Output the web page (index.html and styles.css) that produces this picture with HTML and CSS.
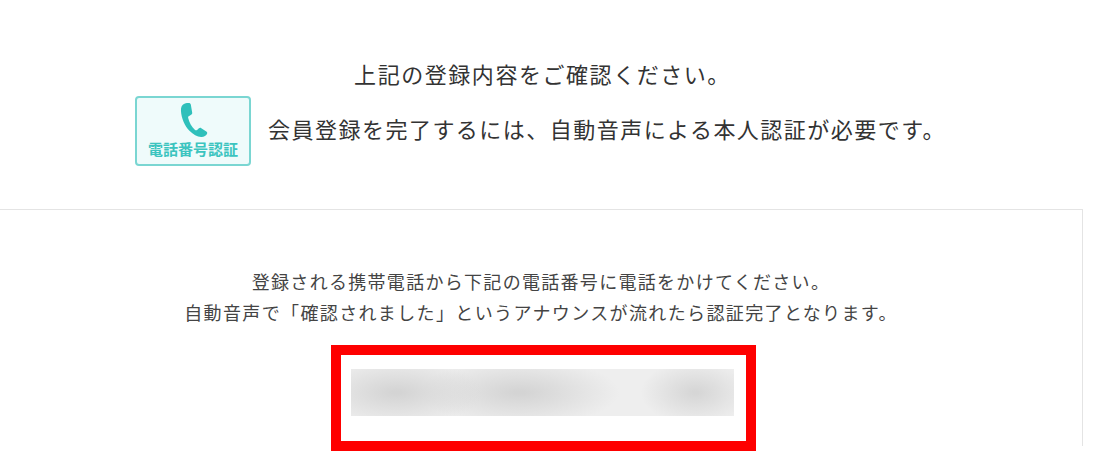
FILE: index.html
```html
<!DOCTYPE html>
<html lang="ja">
<head>
<meta charset="utf-8">
<title>会員登録</title>
<link rel="stylesheet" href="styles.css">
</head>
<body>
<main class="page">
  <section class="intro">
    <p class="intro-lead">上記の登録内容をご確認ください。</p>
    <div class="intro-row">
      <div class="badge">
        <svg class="badge-icon" viewBox="0 0 32 40" aria-hidden="true">
          <path d="M7 2.5 C4 3.5 2.5 6 2.8 10.5 C3.3 18 6.5 26 12 31.5 C15.5 35 20 37.5 24 37.8 C26.8 38 29.5 36.5 30.3 34.5 C30.7 33.5 30.4 32.8 29.5 32.2 L24.2 28.6 C23.3 28 22.5 28.1 21.7 28.8 L19.8 30.4 C19 31 18.2 30.9 17.4 30.2 C14 27 11.5 22.5 10.4 17.8 C10.2 16.8 10.5 16.1 11.4 15.7 L13.5 14.6 C14.5 14 14.8 13.3 14.6 12.2 L13.2 4 C13 2.6 12.2 2 10.9 2 C9.7 2 8.2 2.1 7 2.5 Z"/>
        </svg>
        <span class="badge-label">電話番号認証</span>
      </div>
      <p class="intro-text">会員登録を完了するには、自動音声による本人認証が必要です。</p>
    </div>
  </section>
  <section class="panel">
    <p class="panel-text">登録される携帯電話から下記の電話番号に電話をかけてください。</p>
    <p class="panel-text panel-text-second">自動音声で「確認されました」というアナウンスが流れたら認証完了となります。</p>
    <div class="number-frame">
      <div class="number-blur"></div>
    </div>
  </section>
</main>
</body>
</html>
```

FILE: styles.css
```css
html, body {
  margin: 0;
  padding: 0;
  background: #fff;
}

body {
  width: 1115px;
  height: 451px;
  overflow: hidden;
  font-family: "Noto Sans CJK JP", "Noto Sans", sans-serif;
  color: #333;
}

p {
  margin: 0;
}

.page {
  display: flex;
  flex-direction: column;
}

.intro {
  display: flex;
  flex-direction: column;
  align-items: center;
  padding-top: 57px;
  height: 149px;
  box-sizing: border-box;
}

.intro-lead {
  font-size: 22px;
  line-height: 32px;
  letter-spacing: 1.55px;
  margin-left: -30px;
  white-space: nowrap;
}

.intro-row {
  display: flex;
  align-items: center;
  gap: 17px;
  margin-top: 7px;
  margin-left: -34px;
}

.intro-text {
  font-size: 22px;
  line-height: 32px;
  letter-spacing: 1.47px;
  white-space: nowrap;
  margin-top: -6px;
}

.badge {
  width: 116px;
  height: 70px;
  box-sizing: border-box;
  border: 2px solid #7ad6d2;
  border-radius: 4px;
  background: #effbfb;
  display: flex;
  flex-direction: column;
  align-items: center;
  padding-top: 3px;
}

.badge-icon {
  width: 33px;
  height: 38px;
  fill: #2fc0bb;
}

.badge-label {
  font-size: 15px;
  line-height: 17px;
  font-weight: 700;
  color: #3cc4bf;
  margin-top: 1px;
  white-space: nowrap;
}

.panel {
  width: 1083px;
  height: 237px;
  margin-top: 60px;
  box-sizing: border-box;
  border-top: 1px solid #e4e4e4;
  border-right: 1px solid #e4e4e4;
  display: flex;
  flex-direction: column;
  align-items: center;
  padding-top: 56px;
  overflow: visible;
}

.panel-text {
  font-size: 18px;
  line-height: 30px;
  letter-spacing: 1.3px;
  white-space: nowrap;
  color: #444;
}

.panel-text-second {
  letter-spacing: 1.37px;
  margin-top: 1px;
}

.number-frame {
  width: 425px;
  height: 106px;
  flex-shrink: 0;
  box-sizing: border-box;
  border: 10px solid #fe0000;
  margin-top: 18px;
  margin-left: 4px;
  padding: 14px 12px 0 10px;
  background: #fff;
}

.number-blur {
  height: 47px;
  background:
    radial-gradient(ellipse 85px 34px at 12% 50%, #d4d4d4 5%, transparent),
    radial-gradient(ellipse 100px 34px at 44% 50%, #d4d4d4 5%, transparent),
    radial-gradient(ellipse 55px 32px at 90% 50%, #d6d6d6 5%, transparent),
    #eeeeee;
}
```
